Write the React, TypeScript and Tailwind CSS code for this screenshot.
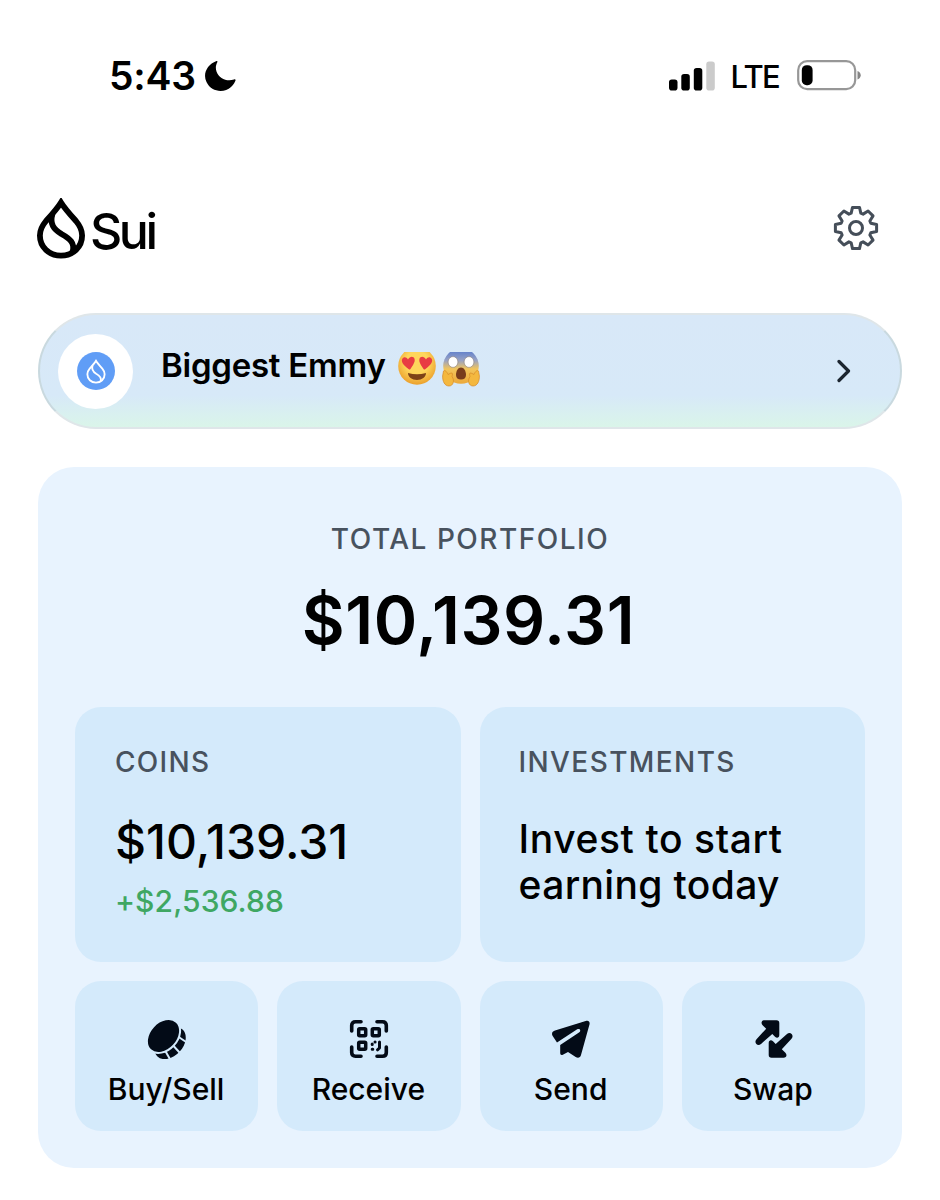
import type { ReactNode } from 'react';

const GEAR_POINTS = Array.from({ length: 8 }, (_, i) => {
  const a = (i * Math.PI) / 4;
  return [
    [-4.8, -14.8],
    [-3.5, -20.6],
    [3.5, -20.6],
    [4.8, -14.8],
  ]
    .map(([x, y]) => `${x * Math.cos(a) - y * Math.sin(a)},${x * Math.sin(a) + y * Math.cos(a)}`)
    .join(' ');
}).join(' ');

function SuiDrop({ className, strokeWidth = 5.8 }: { className?: string; strokeWidth?: number }) {
  return (
    <svg viewBox="0 0 48 61" className={className} fill="none" stroke="currentColor" strokeWidth={strokeWidth}>
      <path d="M24 4.500C20 11 14 17.500 9 23C4.800 28 2.900 32.500 2.900 37.500C2.900 49 12 57.600 24 57.600S45.100 49 45.100 37.500C45.100 32.500 43.200 28 39 23C34 17.500 28 11 24 4.500Z" />
      <path d="M15.500 16C12.500 26 16.500 31 24.500 36C32.500 40.500 38.500 45 35.500 54" />
    </svg>
  );
}

function StatusBar() {
  return (
    <div className="flex h-[152px] items-start justify-between pr-[79px] pl-[109px] pt-[52px]">
      <div className="flex h-12 items-center">
        <span className="-mt-[2px] text-[39px] leading-none font-semibold tracking-[-0.2px]">5:43</span>
        <svg viewBox="0 0 32 32" className="ml-2 size-8">
          <path d="M12.500 1C3 4.500 -1.500 14 2.500 22C7 32 20 33.500 27 27C29.500 24.800 31 22 31.500 20.500C31.800 19.300 31 19 30 19.500C23 22 15 18.500 12.500 11.500C11.300 8 11.900 5 13.300 2.200C13.700 1.300 13.400 .700 12.500 1Z" />
        </svg>
      </div>
      <div className="flex h-12 items-center">
        <svg viewBox="0 0 46 30" className="h-[30px] w-[46px]">
          <rect x="0" y="18.500" width="8.500" height="11" rx="2.800" />
          <rect x="12.300" y="13" width="8.500" height="16.500" rx="2.800" />
          <rect x="24.800" y="7" width="8.500" height="22.500" rx="2.800" />
          <rect x="37.300" y="0.500" width="8.500" height="29" rx="2.800" fill="#cbcbcb" />
        </svg>
        <span className="mt-[1px] ml-4 text-[31px] leading-none font-medium tracking-[-1.7px]">LTE</span>
        <svg viewBox="0 0 64 32" className="ml-[18px] h-8 w-16">
          <rect x="1.200" y="1.200" width="57" height="28" rx="9" fill="none" stroke="#979797" strokeWidth="2.200" />
          <rect x="4.800" y="5.200" width="10.800" height="20" rx="4.800" />
          <path d="M60.500 11C64.800 12.500 64.800 18 60.500 19.500Z" fill="#858585" />
        </svg>
      </div>
    </div>
  );
}

function Header() {
  return (
    <header className="flex h-[161px] items-start justify-between pr-[61px] pl-[37px] pt-[46px]">
      <div className="flex items-start">
        <SuiDrop className="h-[61px] w-12" />
        <span className="ml-[5px] mt-[7px] text-[50px] leading-[52px] font-medium tracking-[-3.5px]">Sui</span>
      </div>
      <button type="button" aria-label="Settings" className="mt-[7px] text-[#454e59]">
        <svg
          viewBox="-23 -23 46 46"
          className="size-[46px]"
          fill="none"
          stroke="currentColor"
          strokeWidth="3"
          strokeLinejoin="round"
        >
          <polygon points={GEAR_POINTS} />
          <circle r="6.500" />
        </svg>
      </button>
    </header>
  );
}

function HeartEyes() {
  return (
    <svg viewBox="0 0 38 33" className="h-[33px] w-[38px]">
      <defs>
        <radialGradient id="face" cx=".5" cy=".4" r=".6">
          <stop offset=".5" stopColor="#fed65c" />
          <stop offset="1" stopColor="#eba02c" />
        </radialGradient>
      </defs>
      <circle cx="19" cy="14" r="18.800" fill="url(#face)" />
      <g fill="#e83c43">
        <path d="M10.500 17C5 13 3 9.500 4.200 7C5.500 4.500 8.500 4.700 10 7.500C12 4 15.500 4.200 16.500 6.800C17.500 10 15 13 12.300 17.300Q11.500 18 10.500 17Z" />
        <path d="M27.500 17C33 13 35 9.500 33.800 7C32.500 4.500 29.500 4.700 28 7.500C26 4 22.500 4.200 21.500 6.800C20.500 10 23 13 25.700 17.300Q26.500 18 27.500 17Z" />
      </g>
      <path d="M10 21Q19 23.500 28 21C28 25 24 28 19 28S10 25 10 21Z" fill="#7d4217" />
    </svg>
  );
}

function Scream() {
  return (
    <svg viewBox="0 0 38 35" className="h-[35px] w-[38px]">
      <defs>
        <linearGradient id="scream" x1="0" y1="-5" x2="0" y2="33" gradientUnits="userSpaceOnUse">
          <stop offset=".12" stopColor="#6482cb" />
          <stop offset=".35" stopColor="#98a2c4" />
          <stop offset=".58" stopColor="#f2c55b" />
          <stop offset="1" stopColor="#eba637" />
        </linearGradient>
      </defs>
      <circle cx="19" cy="14" r="17.800" fill="url(#scream)" />
      <g fill="#fff" stroke="#7a6c67" strokeWidth=".500">
        <ellipse cx="11" cy="10" rx="4.900" ry="5.400" />
        <ellipse cx="27" cy="10" rx="4.900" ry="5.400" />
      </g>
      <path d="M19 15.500C22 15.500 24 19 24 23C24 26 22 27.500 19 27.500S14 26 14 23C14 19 16 15.500 19 15.500Z" fill="#783c1c" />
      <g fill="#f4b83f" stroke="#d58a28" strokeWidth=".700">
        <path d="M1.500 19C3 17.500 5 20 6 22.500L9 21C11 20.500 10.500 23 10 24.500C13 29 11 34 7 34C2.500 34 .500 29 .600 24Z" />
        <path d="M36.500 19C35 17.500 33 20 32 22.500L29 21C27 20.500 27.500 23 28 24.500C25 29 27 34 31 34C35.500 34 37.500 29 37.400 24Z" />
      </g>
    </svg>
  );
}

function AccountBanner() {
  return (
    <div className="px-[38px]">
      <button
        type="button"
        className="flex h-[116px] w-full items-center rounded-full border-2 border-[#c9d9df] border-y-[#dfe6e9] bg-linear-to-b from-[#d8e8f8] from-0% via-[#d7e9f8] via-72% to-[#daf5e9] to-100% pr-[49px] pl-[18px] text-left"
      >
        <span className="flex size-[75px] items-center justify-center rounded-full bg-white">
          <span className="flex size-[38px] items-center justify-center rounded-full bg-[#609df6] text-white">
            <SuiDrop className="h-[25px] w-5" strokeWidth={4.5} />
          </span>
        </span>
        <span className="ml-[28px] -mt-3 text-[33px] leading-10 font-semibold tracking-[-0.25px]">Biggest Emmy</span>
        <span className="ml-[12px] flex items-start gap-[6px] -mt-[4px]">
          <HeartEyes />
          <Scream />
        </span>
        <svg
          viewBox="0 0 14 24"
          className="ml-auto h-6 w-3.5"
          fill="none"
          stroke="#1c2630"
          strokeWidth="3.200"
          strokeLinecap="round"
          strokeLinejoin="round"
        >
          <path d="M2 2.500L11.500 12L2 21.500" />
        </svg>
      </button>
    </div>
  );
}

function CoinIcon() {
  return (
    <svg viewBox="0 0 40 40" className="size-10">
      <ellipse cx="23" cy="24" rx="18.400" ry="13" transform="rotate(-47 23 24)" />
      <g stroke="#d4eafb" strokeWidth="2">
        <path d="M16 28L23.500 41" />
        <path d="M22 22L33 34" />
        <path d="M28 15.500L42 25" />
      </g>
      <ellipse
        cx="16.500"
        cy="17"
        rx="19.200"
        ry="13.900"
        stroke="#d4eafb"
        strokeWidth="2"
        transform="rotate(-47 16.500 17)"
      />
    </svg>
  );
}

function QrIcon() {
  return (
    <svg viewBox="0 0 40 40" className="size-10" fill="none" stroke="currentColor">
      <g strokeWidth="3.600" strokeLinecap="round">
        <path d="M2.700 12V6.500Q2.700 2.700 6.500 2.700H12" />
        <path d="M28 2.700H33.500Q37.300 2.700 37.300 6.500V12" />
        <path d="M37.300 28V33.500Q37.300 37.300 33.500 37.300H28" />
        <path d="M12 37.300H6.500Q2.700 37.300 2.700 33.500V28" />
      </g>
      <g strokeWidth="3.500">
        <rect x="9.700" y="9.700" width="7" height="7" rx="1" />
        <rect x="23.300" y="9.700" width="7" height="7" rx="1" />
        <rect x="9.700" y="23.300" width="7" height="7" rx="1" />
      </g>
      <g strokeWidth="3" strokeLinecap="round" strokeLinejoin="round">
        <path d="M23.200 25.500V25M26 23H26.100M23.200 30.300H23.800" />
        <path d="M30.500 23V29L28.500 30.800" />
      </g>
    </svg>
  );
}

function SendIcon() {
  return (
    <svg viewBox="0 0 40 40" className="size-10">
      <path d="M35.500 1.700C37.700 1.400 39 2.700 38.600 5L30 36C29.300 38.700 27 39.500 24.700 38L17 33L11.800 35.700C10.200 36.500 9.200 35.700 9.200 34V26L28 13.500C30.500 11.800 28.800 8.800 26.200 10.300L6 23.500L2 17.500C.300 14.800 1 12.300 4 11.400Z" />
    </svg>
  );
}

function SwapIcon() {
  return (
    <svg viewBox="0 0 40 40" className="ml-px size-10">
      <path d="M10.500 1.300H22.500Q25.300 1.300 25.300 4V16C25.300 18.800 22.800 19.500 21 17.700L18.300 15L7 25C3.500 28 -.500 23.500 2.500 20.200L12.200 9.700L8.600 6.300C6.600 4.200 7.500 1.300 10.500 1.300Z" />
      <path d="M29.500 38.700H17.500Q14.700 38.700 14.700 36V24C14.700 21.200 17.200 20.500 19 22.300L21.700 25L33 15C36.500 12 40.500 16.500 37.500 19.800L27.800 30.300L31.400 33.700C33.400 35.800 32.500 38.700 29.500 38.700Z" />
    </svg>
  );
}

function Action({ label, children }: { label: string; children: ReactNode }) {
  return (
    <button
      type="button"
      className="flex h-[150px] flex-1 flex-col items-center rounded-[26px] bg-[#d4eafb] pt-[38px] text-[#030b17]"
    >
      <span className="fill-current">{children}</span>
      <span className="mt-[12px] -ml-px text-[30px] leading-9 font-medium text-black">{label}</span>
    </button>
  );
}

function Portfolio() {
  return (
    <section className="mx-[38px] mt-[38px] h-[701px] rounded-[36px] bg-[#e8f3fe] px-[37px] pt-[54px]">
      <h2 className="text-center text-[28px] leading-9 font-[450] tracking-[1.5px] text-[#48525e]">TOTAL PORTFOLIO</h2>
      <p className="mt-[23px] -ml-[3px] h-20 text-center text-[66px] leading-20 font-semibold tracking-[0.6px]">
        $10,139.31
      </p>
      <div className="mt-[47px] grid grid-cols-2 gap-[19px]">
        <div className="h-[255px] rounded-[26px] bg-[#d4eafb] pt-[37px] pl-10">
          <h3 className="text-[28px] leading-9 font-[450] tracking-[1.3px] text-[#48525e]">COINS</h3>
          <p className="mt-[34px] text-[48px] leading-14 font-medium">$10,139.31</p>
          <p className="mt-[13px] text-[30px] leading-9 font-medium tracking-[0.1px] text-[#3fa763]">+$2,536.88</p>
        </div>
        <div className="h-[255px] rounded-[26px] bg-[#d4eafb] pt-[37px] pl-[39px]">
          <h3 className="text-[28px] leading-9 font-[450] tracking-[1.400px] text-[#48525e]">INVESTMENTS</h3>
          <p className="mt-[36px] text-[39px] leading-[46px] font-medium tracking-[0.600px]">
            Invest to start
            <br />
            <span className="tracking-[0.350px]">earning today</span>
          </p>
        </div>
      </div>
      <div className="mt-[19px] flex gap-[19px]">
        <Action label="Buy/Sell">
          <CoinIcon />
        </Action>
        <Action label="Receive">
          <QrIcon />
        </Action>
        <Action label="Send">
          <SendIcon />
        </Action>
        <Action label="Swap">
          <SwapIcon />
        </Action>
      </div>
    </section>
  );
}

export default function App() {
  return (
    <main className="h-[1200px] w-[940px] overflow-hidden bg-white font-['Inter',sans-serif] text-black">
      <StatusBar />
      <Header />
      <AccountBanner />
      <Portfolio />
    </main>
  );
}
